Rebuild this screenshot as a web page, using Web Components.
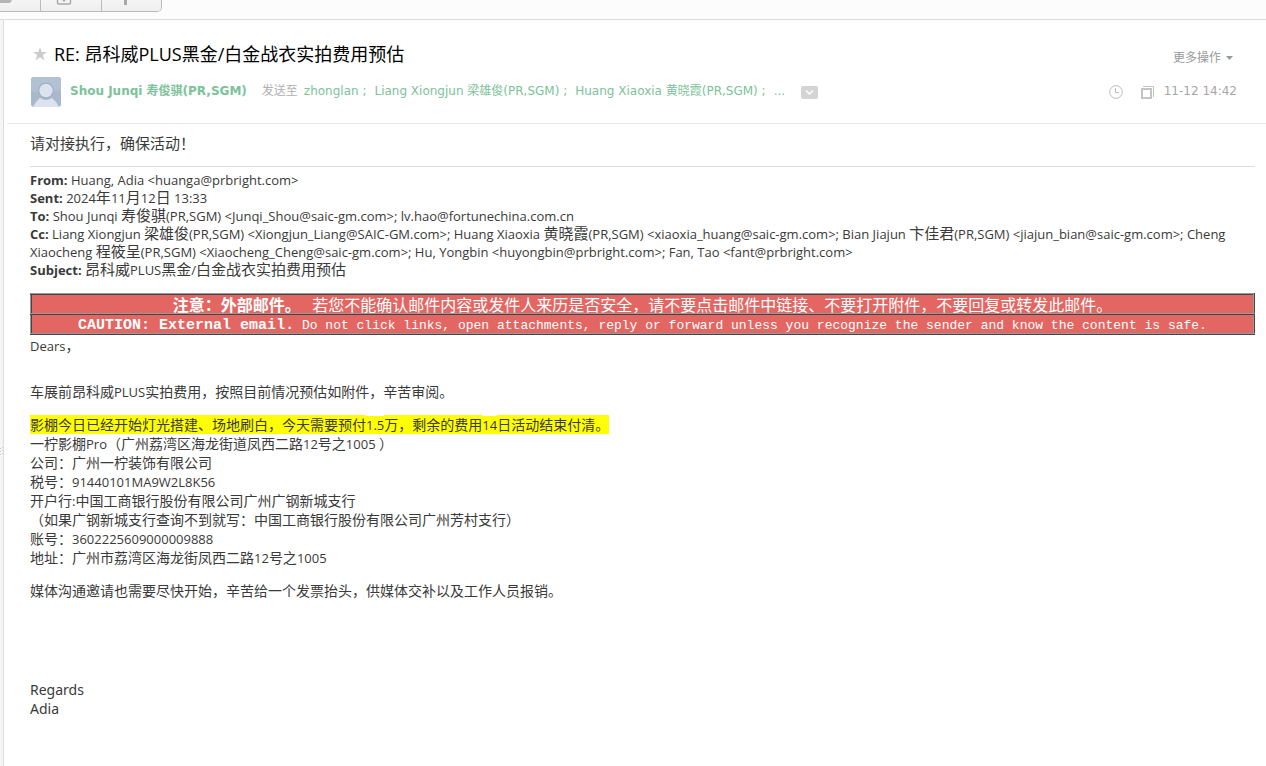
<!DOCTYPE html>
<html lang="zh-CN">
<head>
<meta charset="utf-8">
<title>RE: 昂科威PLUS黑金/白金战衣实拍费用预估</title>
<style>
html,body{height:100%}
body{margin:0;background:#fff;color:#3a3a3a;font-family:"DejaVu Sans","Noto Sans CJK SC",sans-serif;font-size:12px;overflow:hidden}
</style>
</head>
<body>
<mail-app></mail-app>
<script>
// Wraps each run of Han text so it can carry its own face and size.
const runs = s => s.replace(/&/g,'&amp;').replace(/</g,'&lt;').replace(/>/g,'&gt;')
  .replace(/[\u3000-\u303f\u4e00-\u9fff\uff00-\uffef]+/g, m => `<span class="han">${m}</span>`);
const define = (name, html) => customElements.define(name, class extends HTMLElement {
  constructor(){ super(); this.attachShadow({mode:'open'}).innerHTML = html; }
});

define('mail-toolbar', `
<style>
:host{display:block;height:19px;background:#fcfcfc;border-bottom:1px solid #dedede}
.group{display:flex;width:max-content;height:11px;overflow:hidden;border:solid #bbb;border-width:0 1px 1px 0;border-radius:0 0 5px 0}
button{box-sizing:border-box;display:flex;justify-content:center;align-items:flex-start;width:61px;height:12px;padding:0;border:0;border-left:1px solid #bbb;background:linear-gradient(#f5f5f5,#efefef)}
button:first-child{width:40px;border-left:0;justify-content:flex-start}
button:nth-child(2){padding-right:14px}
button:last-child{width:60px;padding-right:12px}
svg{display:block}
</style>
<div class="group">
<button aria-label="归档"><svg width="14" height="12"><path d="M0 0H12L10 3H0Z" fill="#b5b5b5"/></svg></button>
<button aria-label="移动"><svg width="16" height="12"><path d="M1.500-3V2.500Q1.500 4 3 4H13Q14.500 4 14.500 2.500V-3M7 0L8 1L9 0" fill="none" stroke="#a8a8a8" stroke-width="1.500"/></svg></button>
<button aria-label="更多"><svg width="4" height="12"><path d="M0 0H3V5H0Z" fill="#a8a8a8"/></svg></button>
</div>`);

define('split-handle', `
<style>
:host{display:flex;align-items:center;width:3px;background:#f5f5f5;border-right:1px solid #ddd}
svg{display:block;margin-top:116px}
</style>
<svg width="3" height="11"><path d="M0 2h1v1H0zM0 5h1v1H0zM0 8h1v1H0zM2 1h1v1H2zM2 4h1v1H2zM2 7h1v1H2z" fill="#ccc"/></svg>`);

define('user-avatar', `
<style>:host{display:block;width:30px;height:30px}svg{display:block}</style>
<svg width="30" height="30" viewBox="0 0 30 30" role="img" aria-label="头像"><defs><clipPath id="c"><rect width="30" height="30" rx="3"/></clipPath></defs>
<g clip-path="url(#c)"><rect width="30" height="30" fill="#a8b9cb"/><path d="M0 0H30V13Q15 18 0 14Z" fill="#b3c2d2"/><path d="M2 30Q5 24 9 21Q15 25 21 21Q25 24 28 30Z" fill="#dce3ee"/><circle cx="15" cy="13.500" r="8" fill="#9fb1c5"/><circle cx="15" cy="13.500" r="6.700" fill="#dce3ee"/></g></svg>`);

define('mail-header', `
<style>
:host{display:block;margin-left:3px;padding:22px 29px 16px 24px;border-bottom:1px solid #e6e6e6}
.row{display:flex;align-items:center}
h1{margin:0 0 0 7px;font:400 18px/20px "Open Sans","Noto Sans CJK SC",sans-serif;color:#000}
button{border:0;padding:0;background:none;font:inherit;color:inherit;display:flex;align-items:center}
.star{margin-left:2px}
.more{margin-left:auto;margin-right:4px;gap:5px;color:#999;line-height:16px;padding-top:8px}
.from{margin-top:11px;line-height:16px;height:30px}
.from a,.to,time{padding-bottom:2px}
a{color:#7cc29a;text-decoration:none;white-space:nowrap}
.name{margin-left:9px;font-weight:700}
.to{margin:0 6px 0 15px;color:#b0b0b0}
.people{display:flex;gap:8px}
.toggle{margin:0 0 0 16px}
.when{margin-left:auto;display:flex;align-items:center;color:#a6a6a6}
.when svg{margin-right:18px}
.when svg+svg{margin-right:10px}
svg{display:block}
</style>
<div class="row">
<button class="star" aria-label="星标"><svg width="14" height="14" viewBox="0 0 14 14"><path d="M7 0L8.700 5H14L9.800 8.100L11.300 13.500L7 10.300L2.700 13.500L4.200 8.100L0 5H5.300Z" fill="#ccc"/></svg></button>
<h1>RE: 昂科威PLUS黑金/白金战衣实拍费用预估</h1>
<button class="more">更多操作<svg width="7" height="4"><path d="M0 0H7L3.500 4Z" fill="#999"/></svg></button>
</div>
<div class="row from">
<user-avatar></user-avatar>
<a class="name" href="#sender">Shou Junqi 寿俊骐(PR,SGM)</a><span class="to">发送至</span>
<div class="people"><a href="#p1">zhonglan ;</a><a href="#p2">Liang Xiongjun 梁雄俊(PR,SGM) ;</a><a href="#p3">Huang Xiaoxia 黄晓霞(PR,SGM) ;</a><a href="#all">...</a></div>
<button class="toggle" aria-label="展开"><svg width="17" height="13"><rect width="17" height="13" rx="2" fill="#d4d4d4"/><path d="M5 4.500L8.500 8L12 4.500" fill="none" stroke="#fff" stroke-width="1.500"/></svg></button>
<div class="when"><svg width="14" height="14" fill="none" stroke="#bbb"><circle cx="7" cy="7" r="6.300"/><path d="M6.500 3V7.500H10"/></svg>
<svg width="13" height="13" fill="none" stroke="#c4c4c4"><path d="M1 3H10V12H1Z" stroke-width="2"/><path d="M2 .5H12.500V11"/></svg><time>11-12 14:42</time></div>
</div>`);

const meta = [
 ['From','Huang, Adia <huanga@prbright.com>'],
 ['Sent','2024年11月12日 13:33'],
 ['To','Shou Junqi 寿俊骐(PR,SGM) <Junqi_Shou@saic-gm.com>; lv.hao@fortunechina.com.cn'],
 ['Cc','Liang Xiongjun 梁雄俊(PR,SGM) <Xiongjun_Liang@SAIC-GM.com>; Huang Xiaoxia 黄晓霞(PR,SGM) <xiaoxia_huang@saic-gm.com>; Bian Jiajun 卞佳君(PR,SGM) <jiajun_bian@saic-gm.com>; Cheng Xiaocheng 程筱呈(PR,SGM) <Xiaocheng_Cheng@saic-gm.com>; Hu, Yongbin <huyongbin@prbright.com>; Fan, Tao <fant@prbright.com>'],
 ['Subject','昂科威PLUS黑金/白金战衣实拍费用预估']];
define('mail-meta', `
<style>
:host{display:block;margin-top:13px;padding-top:4px;border-top:1px solid #ddd;font:13px/18px "Open Sans","Noto Sans CJK SC",sans-serif}
.han{font:15px/14px Lato,"Noto Sans CJK SC",sans-serif}
p{margin:0}
</style>${meta.map(([k,v])=>`<p><b>${k}:</b> ${runs(v)}</p>`).join('')}`);

define('caution-banner', `
<style>
:host{display:block;margin-top:14px}
table{width:100%;border-collapse:collapse;background:#e36662;color:#fff;text-align:center}
td{padding:0;border:2px ridge #999}
.zh td{font:16px/18px "Noto Sans CJK SC",sans-serif}
.zh b{margin-right:8px}
.en td{padding-top:3px;font:13px/15px "Liberation Mono",monospace}
.en b{font-size:15px;line-height:1}
</style>
<table><tbody><tr class="zh"><td><b>注意：外部邮件。</b> 若您不能确认邮件内容或发件人来历是否安全，请不要点击邮件中链接、不要打开附件，不要回复或转发此邮件。</td></tr>
<tr class="en"><td><b>CAUTION: External email.</b> Do not click links, open attachments, reply or forward unless you recognize the sender and know the content is safe.</td></tr></tbody></table>`);

define('mail-text', `
<style>
:host{display:block;padding-top:2px;font:400 13px/19px "Open Sans","Noto Sans CJK SC",sans-serif}
.han{font:400 14px/16px "Open Sans","Noto Sans CJK SC",sans-serif}
p{margin:0}
.gap{margin-top:14px}
.lead{margin-top:27px}
mark{background:#ff0;color:inherit}
mark .han{background:#ff0}
.sign{margin-top:79px;font:400 14px/19px "Noto Sans",sans-serif}
</style>
<p>${runs('Dears，')}</p>
<p class="lead">${runs('车展前昂科威PLUS实拍费用，按照目前情况预估如附件，辛苦审阅。')}</p>
<p class="gap"><mark>${runs('影棚今日已经开始灯光搭建、场地刷白，今天需要预付1.5万，剩余的费用14日活动结束付清。')}</mark></p>
${['一柠影棚Pro（广州荔湾区海龙街道凤西二路12号之1005 ）','公司：广州一柠装饰有限公司','税号：91440101MA9W2L8K56','开户行:中国工商银行股份有限公司广州广钢新城支行','（如果广钢新城支行查询不到就写：中国工商银行股份有限公司广州芳村支行）','账号：3602225609000009888','地址：广州市荔湾区海龙街凤西二路12号之1005'].map(t=>`<p>${runs(t)}</p>`).join('')}
<p class="gap">${runs('媒体沟通邀请也需要尽快开始，辛苦给一个发票抬头，供媒体交补以及工作人员报销。')}</p>
<p class="sign">Regards<br>Adia</p>`);

define('mail-body', `
<style>
:host{display:block;padding:9px 11px 0 26px}
.note{margin:0;font:15px/20px "Noto Sans CJK SC",sans-serif}
</style>
<p class="note">请对接执行，确保活动！</p>
<mail-meta></mail-meta><caution-banner></caution-banner><mail-text></mail-text>`);

define('mail-app', `
<style>
:host{display:flex;flex-direction:column;height:100vh}
.view{display:flex;flex:1;min-height:0}
main{flex:1;min-width:0;overflow:hidden}
</style>
<mail-toolbar></mail-toolbar>
<div class="view"><split-handle></split-handle><main><mail-header></mail-header><mail-body></mail-body></main></div>`);
</script>
</body>
</html>
